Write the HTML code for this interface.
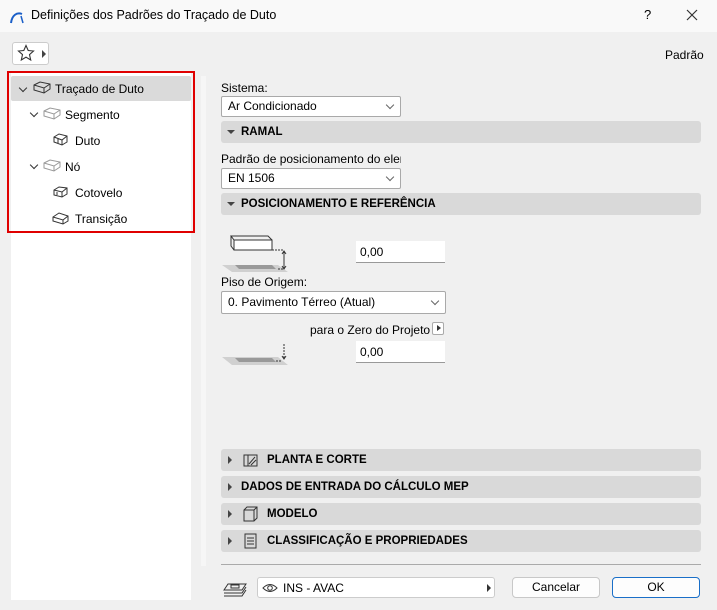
<!DOCTYPE html><html><head><meta charset="utf-8"><style>
*{box-sizing:border-box;margin:0;padding:0}
body{width:717px;height:610px;background:#f0f0f0;font-family:"Liberation Sans",sans-serif;font-size:12px;color:#000;position:relative;overflow:hidden}
.a{position:absolute}
.t{white-space:nowrap}
.hdr{position:absolute;left:221px;width:480px;height:22px;background:#d9d9d9;border-radius:3px;font-weight:bold;font-size:11.5px;line-height:23px}
.tri{position:absolute;left:7px;top:7px;width:0;height:0;border-left:4px solid #444;border-top:4px solid transparent;border-bottom:4px solid transparent}
.trid{position:absolute;left:6px;top:9px;border-top:4px solid #444;border-left:4px solid transparent;border-right:4px solid transparent}
.sel{position:absolute;background:#fff;border:1px solid #a9a9a9;border-radius:2px;height:21px;line-height:19px;padding-left:6px}
.chev{position:absolute;right:7px;top:5px;width:6px;height:6px;border-right:1px solid #666;border-bottom:1px solid #666;transform:rotate(45deg)}
.inp{position:absolute;background:#fff;border-bottom:1px solid #999;height:22px;line-height:22px;padding-left:4px}
.ti{position:absolute;font-size:12px}
.btn{position:absolute;background:#fdfdfd;border:1px solid #c8c8c8;border-radius:4px;height:21px;line-height:19px;text-align:center}
</style></head><body>
<div class="a" style="left:0;top:0;width:717px;height:32px;background:#f9f9f9"></div>
<svg class="a" style="left:9px;top:9px" width="16" height="16"><path d="M2 14 C3 6 8 3 13 5" stroke="#1a5fc8" stroke-width="2" fill="none"/><path d="M12 7 L14 14" stroke="#1a5fc8" stroke-width="1.5"/></svg>
<div class="a t" style="left:31px;top:8px;font-size:12.5px">Definições dos Padrões do Traçado de Duto</div>
<div class="a" style="left:644px;top:7px;font-size:13px">?</div>
<svg class="a" style="left:686px;top:9px" width="12" height="12"><path d="M1 1 L11 11 M11 1 L1 11" stroke="#333" stroke-width="1.2"/></svg>
<div class="a" style="left:12px;top:42px;width:37px;height:23px;background:#fff;border:1px solid #ccc;border-radius:3px"></div>
<svg class="a" style="left:17px;top:44px" width="18" height="18"><path d="M9 1.5 L11.2 6.5 L16.5 7 L12.5 10.6 L13.7 16 L9 13.2 L4.3 16 L5.5 10.6 L1.5 7 L6.8 6.5Z" fill="none" stroke="#333" stroke-width="1.1"/></svg>
<div class="a" style="left:42px;top:50px;border-left:4px solid #444;border-top:4px solid transparent;border-bottom:4px solid transparent"></div>
<div class="a t" style="left:665px;top:48px">Padrão</div>
<div class="a" style="left:11px;top:73px;width:180px;height:527px;background:#fff"></div>
<div class="a" style="left:11px;top:76px;width:180px;height:25px;background:#dadada;border-radius:2px"></div>
<div class="a" style="left:7px;top:71px;width:188px;height:162px;border:2px solid #e00000"></div>
<div class="a" style="left:20px;top:85px;width:6px;height:6px;border-right:1.5px solid #333;border-bottom:1.5px solid #333;transform:rotate(45deg)"></div>
<div class="a" style="left:31px;top:110px;width:6px;height:6px;border-right:1.5px solid #333;border-bottom:1.5px solid #333;transform:rotate(45deg)"></div>
<div class="a" style="left:31px;top:162px;width:6px;height:6px;border-right:1.5px solid #333;border-bottom:1.5px solid #333;transform:rotate(45deg)"></div>
<svg class="a" style="left:32px;top:80px" width="20" height="16"><path d="M2 5 L8 2 L18 4 L18 9 L12 13 L2 10Z M2 5 L12 8 L18 4 M12 8 L12 13" stroke="#333" fill="none"/></svg>
<svg class="a" style="left:42px;top:106px" width="20" height="16"><path d="M2 5 L8 2 L18 4 L18 9 L12 13 L2 10Z M2 5 L12 8 L18 4 M12 8 L12 13" stroke="#999" fill="none"/></svg>
<svg class="a" style="left:42px;top:158px" width="20" height="16"><path d="M2 5 L8 2 L18 4 L18 9 L12 13 L2 10Z M2 5 L12 8 L18 4 M12 8 L12 13" stroke="#999" fill="none"/></svg>
<svg class="a" style="left:52px;top:132px" width="18" height="16"><path d="M2 5 L7 2 L15 4 L15 10 L10 13 L2 10Z M2 5 L10 8 L15 4 M10 8 L10 13 M6 6 L6 11" stroke="#333" fill="none"/></svg>
<svg class="a" style="left:52px;top:184px" width="18" height="16"><path d="M2 6 L7 3 L15 4 L15 10 L10 13 L2 11Z M2 6 L10 8 L15 4 M10 8 L10 13 M5 8 L5 11" stroke="#333" fill="none"/></svg>
<svg class="a" style="left:51px;top:210px" width="20" height="16"><path d="M2 7 L8 3 L17 6 L17 11 L12 14 L2 11Z M2 7 L12 10 L17 6 M12 10 L12 14" stroke="#333" fill="none"/></svg>
<div class="ti t" style="left:55px;top:82px">Traçado de Duto</div>
<div class="ti t" style="left:65px;top:108px">Segmento</div>
<div class="ti t" style="left:75px;top:134px">Duto</div>
<div class="ti t" style="left:65px;top:160px">Nó</div>
<div class="ti t" style="left:75px;top:186px">Cotovelo</div>
<div class="ti t" style="left:75px;top:212px">Transição</div>
<div class="a" style="left:201px;top:76px;width:5px;height:490px;background:#f6f6f6"></div>
<div class="a t" style="left:221px;top:81px">Sistema:</div>
<div class="sel t" style="left:221px;top:96px;width:180px">Ar Condicionado<div class="chev"></div></div>
<div class="hdr" style="top:121px"><div class="trid"></div><span style="margin-left:20px">RAMAL</span></div>
<div class="a t" style="left:221px;top:152px;width:180px;overflow:hidden">Padrão de posicionamento do elemento</div>
<div class="sel t" style="left:221px;top:168px;width:180px">EN 1506<div class="chev"></div></div>
<div class="hdr" style="top:193px"><div class="trid"></div><span style="margin-left:20px">POSICIONAMENTO E REFERÊNCIA</span></div>
<svg class="a" style="left:220px;top:232px" width="72" height="40"><path d="M2 33 L58 33 L68 40 L12 40Z" fill="#d0d0d0"/><path d="M15 33 L52 33 L56 37 L19 37Z" fill="#999"/><rect x="14" y="8" width="38" height="10" fill="#fff" stroke="#333"/><path d="M14 8 L11 4 L48 4 L52 8 M11 4 L11 14 L14 18" stroke="#333" fill="none"/><path d="M52 18 L64 18 M58 37 L64 37" stroke="#333" stroke-dasharray="2 1"/><path d="M64 20 L64 36 M62 22 L64 19 L66 22 M62 34 L64 37 L66 34" stroke="#333" fill="none"/></svg>
<div class="inp t" style="left:356px;top:241px;width:89px">0,00</div>
<div class="a t" style="left:221px;top:275px">Piso de Origem:</div>
<div class="sel t" style="left:221px;top:291px;width:225px;height:23px;line-height:21px">0. Pavimento Térreo (Atual)<div class="chev" style="top:6px"></div></div>
<div class="a t" style="left:310px;top:323px">para o Zero do Projeto</div>
<div class="a" style="left:432px;top:322px;width:12px;height:13px;border:1px solid #aaa;border-radius:2px;background:#fff"></div>
<div class="a" style="left:437px;top:325px;border-left:4px solid #333;border-top:3.5px solid transparent;border-bottom:3.5px solid transparent"></div>
<svg class="a" style="left:220px;top:340px" width="72" height="28"><path d="M2 17 L58 17 L68 25 L12 25Z" fill="#d0d0d0"/><path d="M15 18 L52 18 L56 22 L19 22Z" fill="#999"/><path d="M56 21 L62 21" stroke="#333" stroke-dasharray="2 1"/><path d="M64 4 L64 18" stroke="#333" stroke-dasharray="2 1"/><path d="M62 16 L64 19 L66 16" stroke="#333" fill="none"/></svg>
<div class="inp t" style="left:356px;top:341px;width:89px">0,00</div>
<div class="hdr" style="top:449px"><div class="tri"></div><svg class="a" style="left:22px;top:3px" width="16" height="16"><rect x="1" y="3" width="13" height="11" fill="none" stroke="#333"/><path d="M5 3 L14 3 L14 14 L5 14Z M6 12 L12 5 M8 13 L13 8" stroke="#333" fill="none"/></svg><span style="margin-left:46px">PLANTA E CORTE</span></div>
<div class="hdr" style="top:476px"><div class="tri"></div><span style="margin-left:20px">DADOS DE ENTRADA DO CÁLCULO MEP</span></div>
<div class="hdr" style="top:503px"><div class="tri"></div><svg class="a" style="left:22px;top:3px" width="16" height="16"><path d="M1 4 L4 1 L14 1 L14 12 L11 15 L1 15Z M1 4 L11 4 L11 15 M11 4 L14 1" stroke="#333" fill="none"/></svg><span style="margin-left:46px">MODELO</span></div>
<div class="hdr" style="top:530px"><div class="tri"></div><svg class="a" style="left:22px;top:3px" width="16" height="16"><rect x="2" y="1" width="11" height="14" fill="none" stroke="#333"/><path d="M4 5 H11 M4 8 H11 M4 11 H11" stroke="#333"/></svg><span style="margin-left:46px">CLASSIFICAÇÃO E PROPRIEDADES</span></div>
<div class="a" style="left:221px;top:564px;width:480px;height:1px;background:#aaa"></div>
<svg class="a" style="left:222px;top:578px" width="26" height="20"><path d="M2 12 L6 6 L24 6 L20 12Z M2 15 L20 15 L24 9 M2 18 L20 18 L24 12" stroke="#333" fill="none"/><rect x="9" y="7" width="8" height="3" fill="none" stroke="#333"/></svg>
<div class="a" style="left:257px;top:577px;width:238px;height:21px;background:#fff;border:1px solid #ccc;border-radius:3px"></div>
<svg class="a" style="left:262px;top:582px" width="16" height="12"><path d="M1 6 Q8 -1 15 6 Q8 13 1 6Z" fill="none" stroke="#333"/><circle cx="8" cy="6" r="2.3" fill="none" stroke="#333"/></svg>
<div class="a t" style="left:283px;top:581px">INS - AVAC</div>
<div class="a" style="left:487px;top:584px;border-left:4px solid #333;border-top:4px solid transparent;border-bottom:4px solid transparent"></div>
<div class="btn t" style="left:512px;top:577px;width:88px">Cancelar</div>
<div class="btn t" style="left:612px;top:577px;width:88px;border:1px solid #1a6fc8">OK</div>
</body></html>
